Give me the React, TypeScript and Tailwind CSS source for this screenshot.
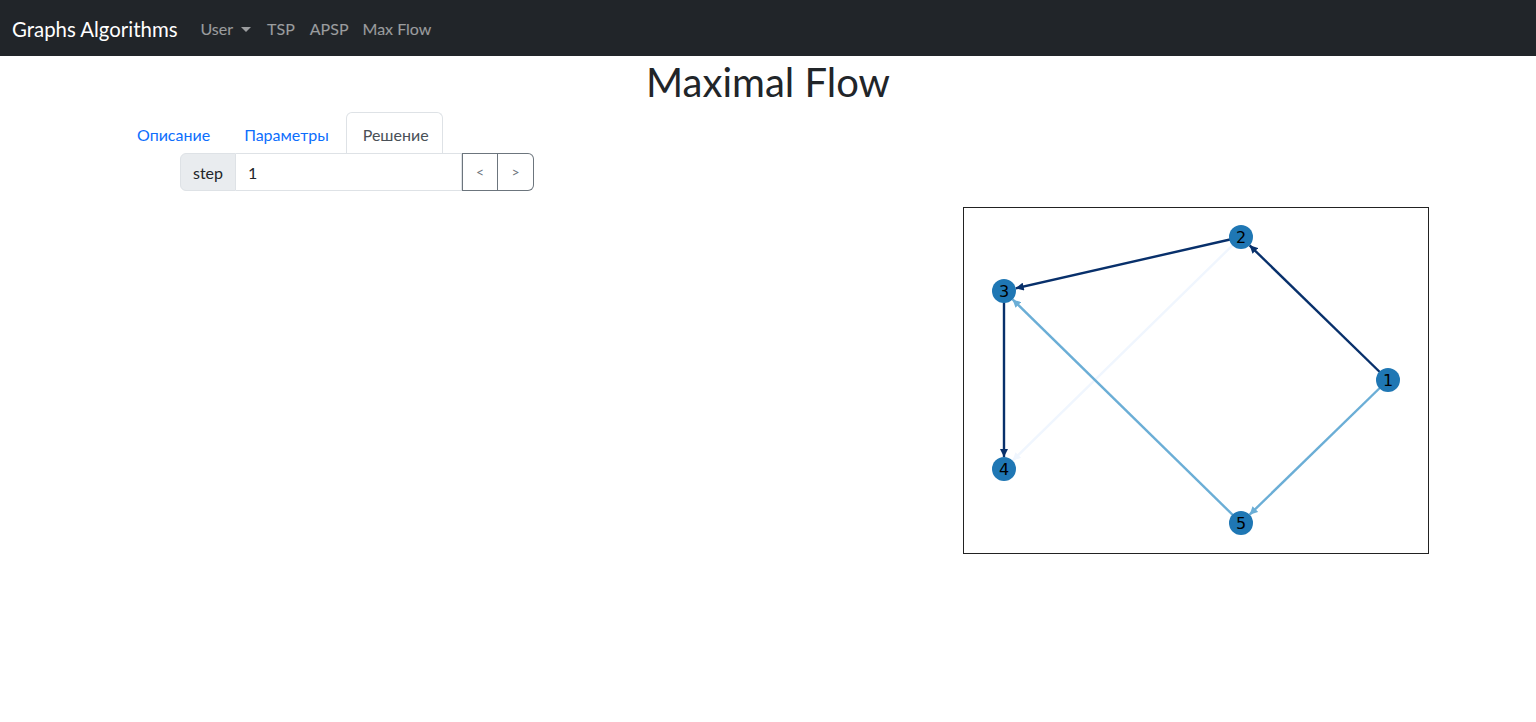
import React from 'react';

type Node = { id: string; x: number; y: number };

const nodes: Node[] = [
    { id: '1', x: 425, y: 173 },
    { id: '2', x: 278, y: 30 },
    { id: '3', x: 41, y: 84 },
    { id: '4', x: 41, y: 262 },
    { id: '5', x: 278, y: 316 },
];

// edge colour follows flow through it (matplotlib Blues)
const edges = [
    { from: '2', to: '4', color: '#f0f6fe', marker: 'faint' },
    { from: '1', to: '5', color: '#6baed6', marker: 'light' },
    { from: '5', to: '3', color: '#6baed6', marker: 'light' },
    { from: '1', to: '2', color: '#08306b', marker: 'dark' },
    { from: '2', to: '3', color: '#08306b', marker: 'dark' },
    { from: '3', to: '4', color: '#08306b', marker: 'dark' },
];

const R = 12;

const FlowGraph: React.FC = () => {
    const byId = (id: string) => nodes.find(n => n.id === id)!;
    return (
        <svg width="466" height="347" viewBox="0 0 466 347" className="block">
            <defs>
                <marker id="dark" viewBox="0 0 10 10" refX="10" refY="5" markerWidth="9" markerHeight="8" markerUnits="userSpaceOnUse" orient="auto">
                    <path d="M0 0 L10 5 L0 10 z" fill="#08306b" />
                </marker>
                <marker id="light" viewBox="0 0 10 10" refX="10" refY="5" markerWidth="9" markerHeight="8" markerUnits="userSpaceOnUse" orient="auto">
                    <path d="M0 0 L10 5 L0 10 z" fill="#6baed6" />
                </marker>
                <marker id="faint" viewBox="0 0 10 10" refX="10" refY="5" markerWidth="9" markerHeight="8" markerUnits="userSpaceOnUse" orient="auto">
                    <path d="M0 0 L10 5 L0 10 z" fill="#f0f6fe" />
                </marker>
            </defs>
            <rect x="0.5" y="0.5" width="465" height="346" fill="white" stroke="#222" strokeWidth="1" />
            {edges.map(e => {
                const a = byId(e.from);
                const b = byId(e.to);
                const dx = b.x - a.x;
                const dy = b.y - a.y;
                const len = Math.sqrt(dx * dx + dy * dy);
                const ex = b.x - (dx / len) * R;
                const ey = b.y - (dy / len) * R;
                return (
                    <line
                        key={e.from + e.to}
                        x1={a.x}
                        y1={a.y}
                        x2={ex}
                        y2={ey}
                        stroke={e.color}
                        strokeWidth="2.4"
                        markerEnd={`url(#${e.marker})`}
                    />
                );
            })}
            {nodes.map(n => (
                <g key={n.id}>
                    <circle cx={n.x} cy={n.y} r={R} fill="#1f77b4" />
                    <text
                        x={n.x}
                        y={n.y + 6}
                        textAnchor="middle"
                        fontSize="16"
                        fill="#000"
                        style={{ fontFamily: '"DejaVu Sans", sans-serif' }}
                    >
                        {n.id}
                    </text>
                </g>
            ))}
        </svg>
    );
};

const App: React.FC = () => {
    return (
        <div className="min-h-screen bg-white text-[#212529] font-['Lato','Open_Sans',sans-serif]">
            <nav className="h-14 bg-[#212529] flex items-center px-3 pt-[2px]">
                <span className="text-white text-[20.4px] mr-[15px]">Graphs Algorithms</span>
                <div className="flex items-center text-base text-white/55">
                    <span className="px-2 flex items-center">
                        User
                        <span className="ml-2 w-0 h-0 border-x-[5px] border-x-transparent border-t-[5px] border-t-white/55" />
                    </span>
                    <span className="px-2">TSP</span>
                    <span className="pl-[7px] pr-2">APSP</span>
                    <span className="pl-[6px] pr-2">Max Flow</span>
                </div>
            </nav>

            <h1 className="text-center text-[40px] leading-[48px] mt-[2px] mb-[6px]">Maximal Flow</h1>

            <div className="px-[120px]">
                <div className="flex text-base">
                    <span className="px-4 pt-[10px] pb-[6px] leading-6 text-[#0d6efd] border border-b-0 border-transparent">Описание</span>
                    <span className="px-4 pt-[10px] pb-[6px] leading-6 text-[#0d6efd] border border-b-0 border-transparent">Параметры</span>
                    <span className="pl-4 pr-[13px] pt-[10px] pb-[6px] leading-6 text-[#495057] border border-[#dee2e6] border-b-0 rounded-t-md">Решение</span>
                </div>

                <div className="flex ml-[60px] h-[38px] text-base">
                    <span className="flex items-center px-3 pt-[2px] bg-[#e9ecef] border border-[#dee2e6] rounded-l-md">step</span>
                    <div className="flex items-center w-[226px] px-3 pt-[2px] border border-l-0 border-[#dee2e6]">1</div>
                    <button className="w-9 border border-[#6c757d] text-[#6c757d] text-sm">&lt;</button>
                    <button className="w-9 border border-l-0 border-[#6c757d] text-[#6c757d] text-sm rounded-r-md">&gt;</button>
                </div>
            </div>

            <div className="pl-[963px] pt-4">
                <FlowGraph />
            </div>
        </div>
    );
};

export default App;
